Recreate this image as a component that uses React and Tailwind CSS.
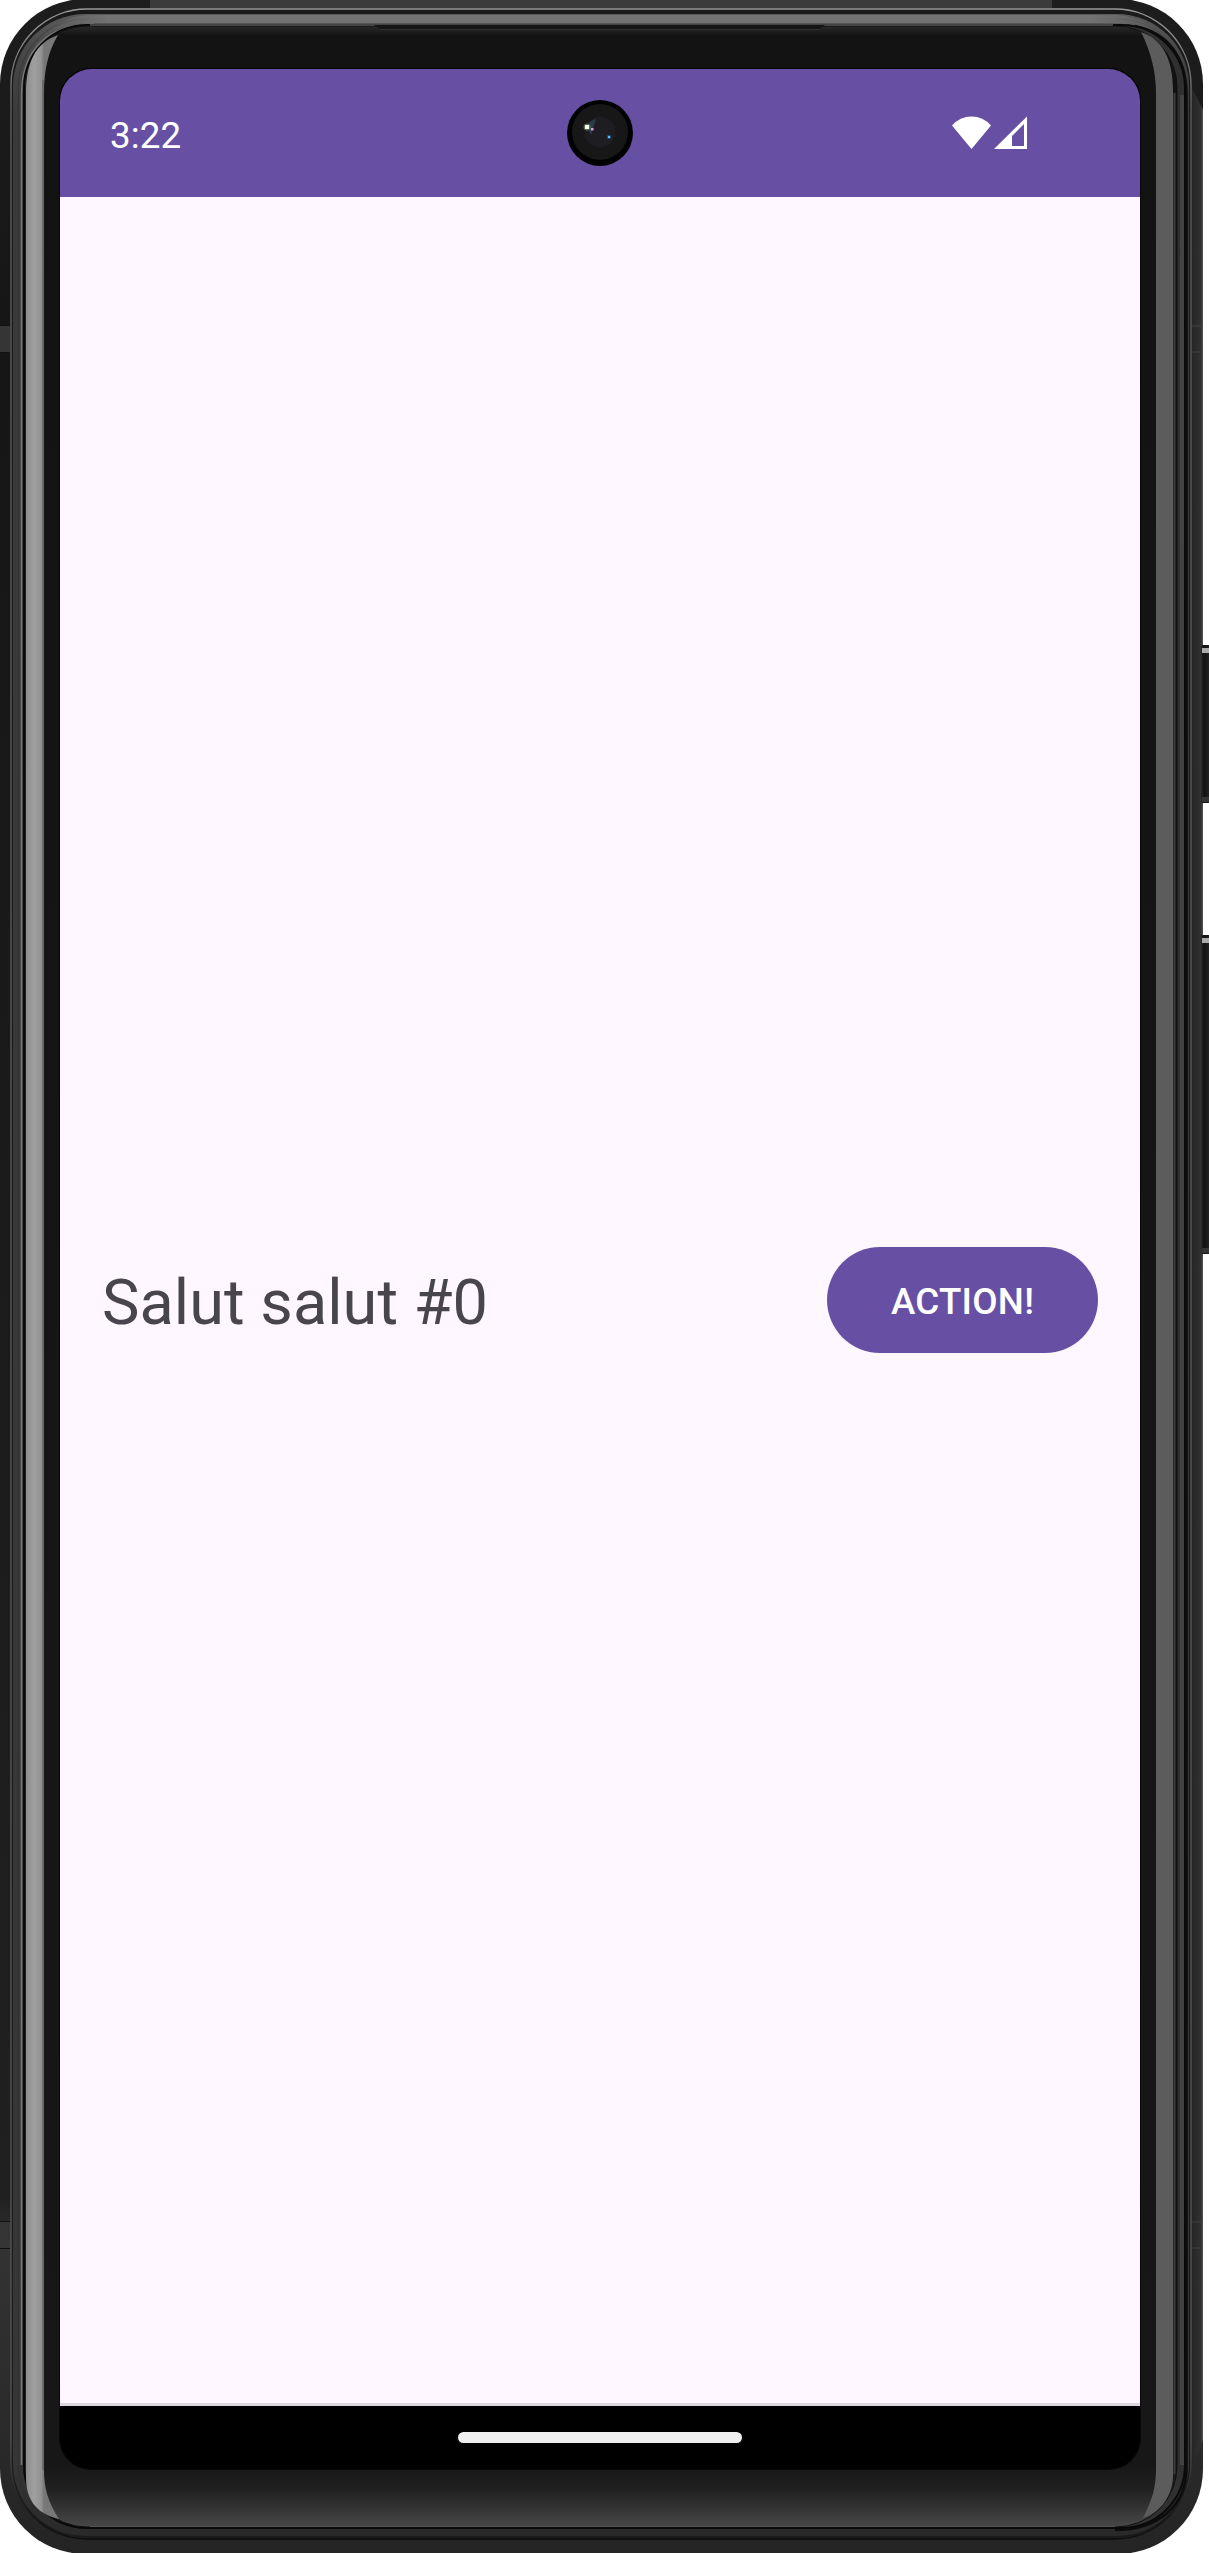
function DeviceFrame() {
  return (
    <svg className="absolute inset-0" width="1209" height="2553" viewBox="0 0 1209 2553" fill="none" aria-hidden="true">
      <defs>
        <linearGradient id="shell" x1="0" x2="0" y1="0" y2="1">
          <stop offset="0" stopColor="#1d1d1d" />
          <stop offset=".13" stopColor="#161616" />
          <stop offset=".86" stopColor="#202020" />
          <stop offset=".88" stopColor="#333" />
          <stop offset="1" stopColor="#242424" />
        </linearGradient>
        <linearGradient id="edge" x1="0" x2="0" y1="0" y2="1">
          <stop offset="0" stopColor="#999" />
          <stop offset=".04" stopColor="#585858" />
          <stop offset=".96" stopColor="#505050" />
          <stop offset=".99" stopColor="#1a1a1a" />
          <stop offset="1" stopColor="#0c0c0c" />
        </linearGradient>
        <linearGradient id="rim" x1="0" x2="0" y1="0" y2="1">
          <stop offset="0" stopColor="#5a5a5a" />
          <stop offset=".014" stopColor="#484848" />
          <stop offset=".04" stopColor="#3a3a3a" />
          <stop offset=".97" stopColor="#363636" />
          <stop offset="1" stopColor="#292929" />
        </linearGradient>
        <linearGradient id="topBand" x1="40" x2="1170" y1="0" y2="0" gradientUnits="userSpaceOnUse">
          <stop offset="0" stopColor="#727272" stopOpacity="0" />
          <stop offset=".06" stopColor="#727272" />
          <stop offset=".93" stopColor="#727272" />
          <stop offset="1" stopColor="#727272" stopOpacity="0" />
        </linearGradient>
        <linearGradient id="glass" x1="0" x2="0" y1="26" y2="2527" gradientUnits="userSpaceOnUse">
          <stop offset="0" stopColor="#292929" />
          <stop offset=".004" stopColor="#131313" />
          <stop offset=".975" stopColor="#171717" />
          <stop offset=".985" stopColor="#202020" />
          <stop offset="1" stopColor="#484848" />
        </linearGradient>
        <linearGradient id="leftShine" x1="26" x2="44" y1="0" y2="0" gradientUnits="userSpaceOnUse">
          <stop offset="0" stopColor="#8d8d8d" />
          <stop offset=".45" stopColor="#a0a0a0" />
          <stop offset=".85" stopColor="#929292" />
          <stop offset="1" stopColor="#777" />
        </linearGradient>
        <linearGradient id="rightEdge" x1="1191" x2="1203" y1="0" y2="0" gradientUnits="userSpaceOnUse">
          <stop offset="0" stopColor="#242424" />
          <stop offset=".85" stopColor="#323232" />
          <stop offset="1" stopColor="#555" />
        </linearGradient>
        <linearGradient id="key" x1="1201" x2="1209" y1="0" y2="0" gradientUnits="userSpaceOnUse">
          <stop offset="0" stopColor="#2a2a2a" />
          <stop offset=".4" stopColor="#111" />
          <stop offset="1" stopColor="#222" />
        </linearGradient>
      </defs>

      {/* metal shell */}
      <rect x="0" y="-1" width="1203" height="2555" rx="85" fill="url(#shell)" />
      <path d="M1191 86L1203 110V2440L1191 2470Z" fill="url(#rightEdge)" />
      <path d="M150 0h902v8H150z" fill="#3b3b3b" />
      <path d="M0 326h10v26H0zM0 2222h10v26H0z" fill="#353535" />
      <path d="M0 325.500h10M0 352.500h10M0 2221.500h10M0 2248.500h10" stroke="#111" />
      <path d="M1191 326h12M1191 352h12M1191 2222h12M1191 2248h12" stroke="#424242" />

      {/* side keys */}
      <path d="M1201 645h8v158h-8zM1201 935h8v319h-8z" fill="url(#key)" />
      <path d="M1202 648h7v5h-7zM1202 938h7v5h-7z" fill="#aaa" />
      <path d="M1202 797h7v5h-7zM1202 1248h7v5h-7z" fill="#353535" />

      {/* polished rim */}
      <rect x="11" y="9" width="1180" height="2530" rx="76" fill="#1a1a1a" stroke="url(#edge)" strokeWidth="1.500" />
      <rect x="13" y="14" width="1176" height="2522" rx="72" fill="url(#rim)" />
      <rect x="18.500" y="19" width="1167" height="2513" rx="67" stroke="#2b2b2b" strokeOpacity=".5" />
      <path d="M86 15H1117C1140 17 1156 27 1168 40C1152 29 1135 24 1113 23H90C68 24 51 30 38 41C50 26 66 17 86 15Z" fill="url(#topBand)" />
      <path d="M21.500 2465V96C21.500 48 49 24 94 24" stroke="#777" strokeWidth="1.500" />
      <rect x="24" y="25" width="1161" height="2503" rx="63" fill="#303030" stroke="#090909" strokeWidth="2" />
      <rect x="26" y="26" width="1151" height="2501" rx="61" fill="url(#glass)" stroke="#101010" />
      <path d="M1182 95V2465" stroke="#434343" strokeWidth="4" />
      <path d="M1135 26C1166 32 1186.500 56 1186.500 94V2468C1186.500 2506 1158 2530 1115 2530" stroke="#0c0c0c" strokeWidth="2.500" />
      <path d="M90 2526.500H1115" stroke="#505050" />
      <path d="M90 25H1113" stroke="#444" strokeWidth="2" />
      <path d="M374 25h451l-6 4H380z" fill="#151515" />
      <path d="M380 29.500H820" stroke="#303030" />

      {/* reflections along the glass edge */}
      <path d="M58 35C35 43 26 63 26 94V2478C26 2500 37 2514 59 2519C48 2502 44 2488 44 2470V94C44 70 48 52 58 35Z" fill="url(#leftShine)" />
      <path d="M43 80V2470" stroke="#555" />
      <path d="M1141 32C1164 40 1173 61 1173 91V2475C1173 2494 1162 2512 1143 2518C1152 2500 1156 2488 1156 2469V93C1156 70 1150 50 1141 32Z" fill="#5c5c5c" />
      <path d="M1174.500 93V2474" stroke="#3c3c3c" strokeWidth="2" />
      <rect x="59" y="68" width="1082" height="2402" rx="32" fill="#060606" />
    </svg>
  );
}

function Camera() {
  return (
    <svg className="absolute left-[506px] top-[30px]" width="68" height="68" viewBox="0 0 68 68" aria-hidden="true">
      <circle cx="34" cy="34" r="33" fill="#000" />
      <circle cx="34" cy="33" r="28" fill="#171717" />
      <circle cx="34" cy="33" r="15.500" fill="#1e1d22" />
      <path d="M21 28q3-7 9-8l-5 16z" fill="#35566b" opacity=".55" />
      <circle cx="21" cy="28" r="3.500" fill="#77856f" opacity=".7" />
      <rect x="19" y="26" width="4" height="4" fill="#f7fbe9" />
      <rect x="25" y="29" width="2.500" height="2.500" fill="#d8a3ce" />
      <circle cx="43" cy="38" r="2.300" fill="#174e80" />
      <rect x="42" y="37" width="2" height="2" fill="#6bb7f0" />
    </svg>
  );
}

function StatusBar() {
  return (
    <header className="relative flex h-32 shrink-0 items-center justify-between bg-[#6750a4] pl-[50px] pr-[113px] text-white">
      <span className="pt-[7px] text-[36.750px] leading-none tracking-[0.1px]">3:22</span>
      <Camera />
      <div className="flex gap-[2px]">
        <svg width="40" height="34" viewBox="0 0 40 34" aria-hidden="true">
          <path d="M0 9.500Q8 0.500 19.500 0.500T39 9.500L19.500 33Z" fill="#fff" />
        </svg>
        <svg width="33" height="34" viewBox="0 0 33 34" aria-hidden="true">
          <path fillRule="evenodd" d="M33 .500V33H0ZM30 8L18 20V30H30Z" fill="#fff" />
        </svg>
      </div>
    </header>
  );
}

export default function App() {
  return (
    <div className="relative h-[2553px] w-[1209px] overflow-hidden bg-white pl-[60px] pt-[69px] font-['Roboto',sans-serif]">
      <DeviceFrame />
      <div className="relative flex h-[2400px] w-[1080px] flex-col overflow-hidden rounded-[32px] bg-black">
        <StatusBar />
        <main className="flex h-[2206px] items-center justify-between bg-[#fef7ff] px-[42px]">
          <p className="pt-[6px] text-[63px] leading-[74px] tracking-[0.06px] text-[#49454f]">Salut salut #0</p>
          <button className="h-[106px] w-[271px] rounded-full bg-[#6750a4] pt-[3px] text-[36.750px] font-medium tracking-[0.25px] text-white">
            ACTION!
          </button>
        </main>
        <div className="h-[3px] bg-[#dcd7dd]" />
        <footer className="flex flex-1 items-center justify-center">
          <div className="h-[11px] w-[284px] rounded-full bg-[#f0f0f0]" />
        </footer>
      </div>
    </div>
  );
}
